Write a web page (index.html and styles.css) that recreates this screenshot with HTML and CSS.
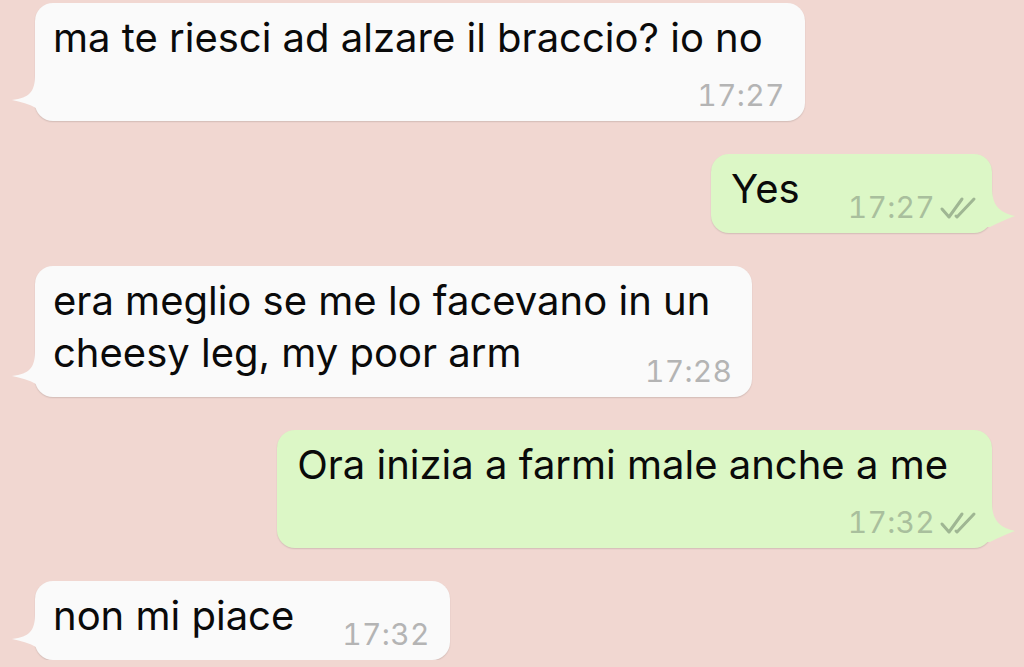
FILE: index.html
```html
<!DOCTYPE html>
<html>
<head>
    <title>Chat</title>
    <link rel="stylesheet" href="styles.css">
</head>
<body>
    <div class="chat">
        <div class="bubble in stacked">
            <p class="text">ma te riesci ad alzare il braccio? io no</p>
            <div class="meta">17:27</div>
            <svg class="tail" viewBox="0 0 34 50"><path d="M24 4 C24 20 19 27 1 29 C10 31 18 33 25 37 L34 37 L34 4 Z"/></svg>
        </div>

        <div class="bubble out">
            <p class="text">Yes<span class="meta">17:27<svg class="ticks" viewBox="0 0 40 24"><path d="M4 13 L11 21 L24 3 M18 20 L19 21 L36 3"/></svg></span></p>
            <svg class="tail" viewBox="0 0 34 50"><path d="M10 4 C10 20 15 29 33 33 C24 36 16 40 8 44 L0 44 L0 4 Z"/></svg>
        </div>

        <div class="bubble in">
            <p class="text">era meglio se me lo facevano in un<br>cheesy leg, my poor arm<span class="meta">17:28</span></p>
            <svg class="tail" viewBox="0 0 34 50"><path d="M24 4 C24 20 19 27 1 29 C10 31 18 33 25 37 L34 37 L34 4 Z"/></svg>
        </div>

        <div class="bubble out stacked">
            <p class="text">Ora inizia a farmi male anche a me</p>
            <div class="meta">17:32<svg class="ticks" viewBox="0 0 40 24"><path d="M4 13 L11 21 L24 3 M18 20 L19 21 L36 3"/></svg></div>
            <svg class="tail" viewBox="0 0 34 50"><path d="M10 4 C10 20 15 29 33 33 C24 36 16 40 8 44 L0 44 L0 4 Z"/></svg>
        </div>

        <div class="bubble in">
            <p class="text">non mi piace<span class="meta">17:32</span></p>
            <svg class="tail" viewBox="0 0 34 50"><path d="M24 4 C24 20 19 27 1 29 C10 31 18 33 25 37 L34 37 L34 4 Z"/></svg>
        </div>
    </div>
</body>
</html>
```

FILE: styles.css
```css
body {
    margin: 0;
    background-color: #f1d7d1;
    font-family: 'Inter', 'Noto Sans', sans-serif;
    color: #0a0a0a;
}

.chat {
    display: flex;
    flex-direction: column;
    align-items: flex-start;
    gap: 33px;
    padding: 3px 32px 0 35px;
}

.bubble {
    position: relative;
    padding: 9px 20px 8px 18px;
    border-radius: 18px;
    box-shadow: 0 1px 1.5px rgba(0,0,0,0.13);
}

.bubble.in {
    background: #fafafa;
    align-self: flex-start;
}

.bubble.out {
    background: #dcf7c6;
    align-self: flex-end;
    padding-right: 14px;
    padding-left: 20px;
}

.text {
    margin: 0;
    font-size: 40px;
    line-height: 52px;
    padding-right: 22px;
    white-space: nowrap;
}

.out .text {
    padding-right: 30px;
}

.meta {
    font-size: 30px;
    line-height: 36px;
    font-variant-numeric: tabular-nums;
    letter-spacing: 0.3px;
    color: #b4b4b4;
    white-space: nowrap;
}

.out .meta {
    color: #a9bf9d;
}

.text .meta {
    float: right;
    margin: 26px -22px 0 48px;
}

.out .text .meta {
    margin-right: -30px;
}

.stacked .meta {
    margin-top: 13px;
    text-align: right;
}

.ticks {
    width: 40px;
    height: 24px;
    margin-left: 3px;
    vertical-align: -2px;
    fill: none;
    stroke: #9fb693;
    stroke-width: 3;
    stroke-linecap: round;
    stroke-linejoin: round;
}

.tail {
    position: absolute;
    bottom: 0;
    width: 34px;
    height: 50px;
}

.in .tail {
    left: -24px;
    fill: #fafafa;
}

.out .tail {
    right: -24px;
    fill: #dcf7c6;
}
```
